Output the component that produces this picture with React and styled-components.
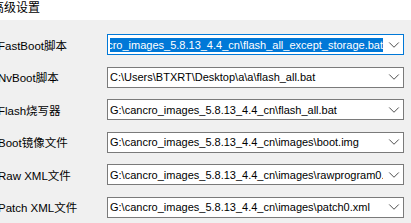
import React from 'react';
import styled, { createGlobalStyle } from 'styled-components';
import { ChevronDown } from 'lucide-react';

const GlobalStyle = createGlobalStyle`
    html, body {
        margin: 0;
        padding: 0;
        background: #f0f0f0;
        overflow: hidden;
    }
    body {
        font-family: "Liberation Sans", "Noto Sans CJK SC", sans-serif;
    }
`

const rows = [
    { label: 'FastBoot脚本', value: 'G:\\cancro_images_5.8.13_4.4_cn\\flash_all_except_storage.bat', focused: true },
    { label: 'NvBoot脚本', value: 'C:\\Users\\BTXRT\\Desktop\\a\\a\\flash_all.bat' },
    { label: 'Flash烧写器', value: 'G:\\cancro_images_5.8.13_4.4_cn\\flash_all.bat' },
    { label: 'Boot镜像文件', value: 'G:\\cancro_images_5.8.13_4.4_cn\\images\\boot.img' },
    { label: 'Raw XML文件', value: 'G:\\cancro_images_5.8.13_4.4_cn\\images\\rawprogram0.xml' },
    { label: 'Patch XML文件', value: 'G:\\cancro_images_5.8.13_4.4_cn\\images\\patch0.xml' },
]

function App() {
    return (
        <Window>
            <GlobalStyle />
            <TitleBar>高级设置</TitleBar>
            <Form>
                {rows.map((r) => (
                    <Row key={r.label}>
                        <Label>{r.label}</Label>
                        <Combo $focused={r.focused}>
                            <Field $focused={r.focused}>
                                <Value $focused={r.focused}>{r.value}</Value>
                            </Field>
                            <DropButton>
                                <ChevronDown size={18} strokeWidth={1} absoluteStrokeWidth color="#505050" />
                            </DropButton>
                        </Combo>
                    </Row>
                ))}
            </Form>
        </Window>
    )
}

export default App

const Window = styled.div`
    width: 411px;
    height: 223px;
    overflow: hidden;
    background: #f0f0f0;
    display: flex;
    flex-direction: column;
`
const TitleBar = styled.div`
    height: 20px;
    background: #ffffff;
    font-size: 12px;
    line-height: 17px;
    color: #000;
    margin-left: -8px;
    white-space: nowrap;
`
const Form = styled.div`
    display: flex;
    flex-direction: column;
    gap: 11.6px;
    padding-top: 14px;
`
const Row = styled.div`
    display: grid;
    grid-template-columns: 107px 297px;
    align-items: center;
    height: 21px;
`
const Label = styled.div`
    margin-left: -2px;
    font-size: 11.5px;
    color: #000;
    white-space: nowrap;
`
const Combo = styled.div`
    height: 21px;
    min-width: 0;
    box-sizing: border-box;
    border: 1px solid ${props => props.$focused ? '#0078d7' : '#7a7a7a'};
    background: #fff;
    display: grid;
    grid-template-columns: minmax(0, 1fr) 20px;
    align-items: center;
    padding-left: 2px;
`
const Field = styled.div`
    min-width: 0;
    height: 14px;
    overflow: hidden;
    display: flex;
    justify-content: ${props => props.$focused ? 'flex-end' : 'flex-start'};
    align-items: center;
`
const Value = styled.span`
    flex-shrink: 0;
    white-space: nowrap;
    font-size: 11px;
    line-height: 14px;
    color: ${props => props.$focused ? '#fff' : '#000'};
    background: ${props => props.$focused ? '#0078d7' : 'transparent'};
`
const DropButton = styled.div`
    display: flex;
    align-items: center;
    justify-content: center;
    padding-left: 2px;
    svg {
        display: block;
    }
`
